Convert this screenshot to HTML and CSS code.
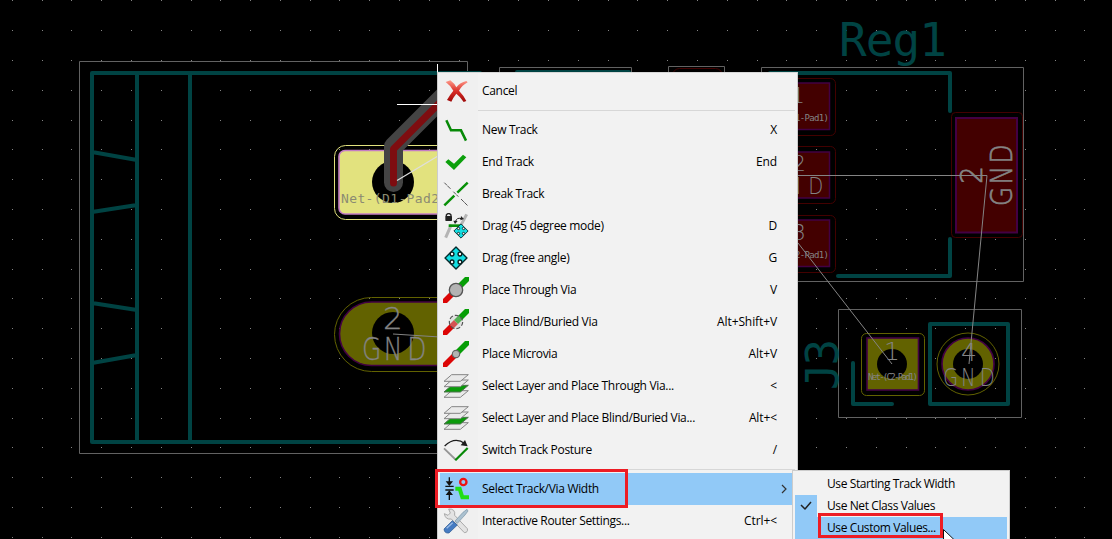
FILE: index.html
```html
<!DOCTYPE html>
<html lang="en">
<head>
<meta charset="utf-8">
<title>PCB Editor</title>
<link rel="stylesheet" href="styles.css">
</head>
<body>
<main class="editor">
<svg class="board" width="1112" height="539" viewBox="0 0 1112 539">
  <defs>
    <path id="dots" d="M12 .5h1M42 .5h1M71 .5h1M101 .5h1M131 .5h1M161 .5h1M191 .5h1M220 .5h1M250 .5h1M280 .5h1M310 .5h1M339 .5h1M369 .5h1M399 .5h1M429 .5h1M459 .5h1M488 .5h1M518 .5h1M548 .5h1M578 .5h1M608 .5h1M637 .5h1M667 .5h1M697 .5h1M727 .5h1M757 .5h1M786 .5h1M816 .5h1M846 .5h1M876 .5h1M906 .5h1M935 .5h1M965 .5h1M995 .5h1M1025 .5h1M1055 .5h1M1084 .5h1"/>
  </defs>
  <g class="grid">
    <use href="#dots" y="0"/><use href="#dots" y="30"/><use href="#dots" y="60"/><use href="#dots" y="90"/><use href="#dots" y="120"/><use href="#dots" y="149"/><use href="#dots" y="179"/><use href="#dots" y="209"/><use href="#dots" y="239"/><use href="#dots" y="269"/><use href="#dots" y="298"/><use href="#dots" y="328"/><use href="#dots" y="358"/><use href="#dots" y="388"/><use href="#dots" y="418"/><use href="#dots" y="447"/><use href="#dots" y="477"/><use href="#dots" y="507"/><use href="#dots" y="537"/>
  </g>
  <g class="courtyard">
    <path d="M79.5 61.5H467.5V453.5H79.5Z"/>
    <path d="M499.5 90V67.5H631.5V90M668.5 90V66.5H724.5V90"/>
    <path d="M761.5 67.5H1023.5V281.5H761.5Z"/>
    <path d="M838.5 309.5H1021.5V417.5H838.5Z"/>
  </g>
  <g class="silk">
    <path d="M480 73H92V442H480M137 73V442M190 73V442M92 152L137 160M92 212L137 205M92 303L137 310M92 363L137 355"/>
    <path d="M517 72H629M770 73H950V111M950 239V276H838"/>
    <path d="M930 324H1008V404H930ZM853 363V404H892"/>
  </g>
  <text class="silk-text" x="839" y="56" font-size="46" textLength="108">Reg1</text>
  <text class="silk-text" transform="translate(838 390) rotate(-90)" font-size="44" textLength="51">J3</text>

  <g class="pad-red">
    <rect x="772" y="83" width="57.5" height="46.5"/><rect x="772" y="152" width="57.5" height="46"/><rect x="772" y="220" width="57.5" height="46.5"/>
    <rect class="wide" x="956" y="118" width="61" height="114.5"/>
  </g>
  <g class="clear-red">
    <rect x="766.5" y="78.5" width="69" height="57" rx="5"/><rect x="766.5" y="146.5" width="69" height="57" rx="5"/><rect x="766.5" y="215.5" width="69" height="57" rx="5"/>
    <rect x="951.5" y="112.5" width="71" height="125" rx="4"/><rect x="672.5" y="68.5" width="50" height="50" rx="7"/>
  </g>
  <g class="pad-text">
    <text x="791" y="103" font-size="22">1</text><text class="small" x="795" y="121" font-size="9" textLength="34">1-Pad1)</text>
    <text x="792" y="171" font-size="22">2</text><text transform="translate(764 194) scale(.85 1)" x="0 27 52" font-size="23">GND</text>
    <text x="792" y="240" font-size="22">3</text><text class="small" x="795" y="258" font-size="9" textLength="34">2-Pad1)</text>
    <text class="bold" transform="translate(982 184) rotate(-90)" font-size="31" textLength="18" lengthAdjust="spacingAndGlyphs">2</text>
    <text class="bold" transform="translate(1012 206) rotate(-90) scale(.8 1)" x="0 27 53" font-size="31">GND</text>
  </g>

  <rect class="pad-olive" x="867" y="338" width="51.5" height="52"/>
  <rect class="clear-olive" x="861.5" y="333.5" width="63" height="62" rx="5"/>
  <circle class="pad-olive" cx="968" cy="364" r="26"/><circle class="clear-olive" cx="968" cy="364" r="31"/>
  <circle cx="892" cy="364" r="15"/><circle cx="968" cy="364" r="15"/>
  <g class="pad-text">
    <text x="884" y="360" font-size="25">1</text><text class="small" x="868" y="380" font-size="9" textLength="50">Net-(C2-Pad1)</text>
    <text x="961" y="361" font-size="25">4</text><text transform="translate(943 386) scale(.78 1)" x="0 23 47" font-size="25">GND</text>
  </g>

  <rect class="pad-olive" x="339.5" y="302" width="130" height="63.5" rx="32"/>
  <rect class="clear-olive" x="334.5" y="297.5" width="140" height="74" rx="37"/>
  <circle cx="393" cy="333" r="21"/>
  <g class="pad-text large">
    <text x="383" y="329" font-size="31">2</text><text transform="translate(362 360) scale(.78 1)" x="0 28 58" font-size="32">GND</text>
  </g>

  <rect class="pad-lit" x="339" y="150.5" width="130" height="63.5" rx="6"/>
  <rect class="clear-lit" x="334.5" y="145.5" width="140" height="74" rx="11"/>
  <circle cx="393" cy="182" r="21"/>
  <path class="track-clear" d="M393.5 182.500V146.500L445 95"/>
  <path class="track" d="M393.500 183V149L445 97.500"/>
  <text class="net-lit" x="341" y="203" font-size="13" textLength="98">Net-(D1-Pad2</text>
  <g class="rats">
    <path d="M797 175.500H987L969 364M798 243L892 364M393 334L440 337"/>
  </g>
  <path class="rats-lit" d="M397 180.500L438 156"/>
  <path class="cross" d="M397 104.500H438M437.500 64V73"/>
</svg>

<svg class="symbols" width="0" height="0">
  <defs>
    <linearGradient id="redfade" x1="0" y1="0" x2="0" y2="1"><stop offset="0" stop-color="#ff9a8a"/><stop offset=".5" stop-color="#d92d27"/><stop offset="1" stop-color="#9c0707"/></linearGradient>
    <symbol id="move" viewBox="-36 -36 72 72">
      <path d="M0-32L32 0 0 32-32 0Z" fill="#12dfe3" stroke="#032a2c" stroke-width="4" stroke-linejoin="round"/>
      <g fill="#f6f6f6" stroke="#0c1f20" stroke-width="4"><circle cx="-11.500" cy="-11.500" r="5.500"/><circle cx="11.500" cy="-11.500" r="5.500"/><circle cx="-11.500" cy="11.500" r="5.500"/><circle cx="11.500" cy="11.500" r="5.500"/></g>
    </symbol>
    <symbol id="layers" viewBox="0 0 78 78">
      <g fill="#e9e9e9" stroke="#858585" stroke-width="3" stroke-linejoin="round">
        <path d="M26 53H76L52 73H3Z"/><path d="M26 37H76L52 57H3Z" fill="#0a9a0a" stroke="#4e704e"/><path d="M26 21H76L52 41H3Z"/><path d="M26 5H76L52 25H3Z"/>
      </g>
    </symbol>
  </defs>
</svg>

<nav class="menu">
  <div class="item"><svg class="icon" viewBox="0 0 78 78"><path fill="url(#redfade)" d="M8 12L22 7Q34 16 40 28Q51 13 70 9L74 13Q57 22 48 38Q61 51 70 69L62 72Q52 56 40 47Q31 58 25 71L12 66Q20 51 31 38Q22 22 8 12Z"/></svg><span>Cancel</span></div>
  <hr class="rule">
  <div class="item"><svg class="icon" viewBox="0 0 78 78"><path d="M10 10L24 40H54L69 71" fill="none" stroke="#078907" stroke-width="7.500"/></svg><span>New Track</span><kbd>X</kbd></div>
  <div class="item"><svg class="icon" viewBox="0 0 78 78"><path d="M7 39L16 31 33 44 60 17 70 25 33 63Z" fill="#0ca00c"/></svg><span>End Track</span><kbd>End</kbd></div>
  <div class="item"><svg class="icon" viewBox="0 0 78 78"><path d="M4 5L23 24M31 32L46 47M54 54L75 75" stroke="#555" stroke-width="3" stroke-dasharray="12 2"/><path d="M4 73L34 44M43 35L74 5" stroke="#079007" stroke-width="7.500"/></svg><span>Break Track</span></div>
  <div class="item"><svg class="icon" viewBox="0 0 78 78"><path d="M8 74L25 35M53 38L71 4" stroke="#b4b4b4" stroke-width="9"/><path d="M17 38H53" stroke="#078e07" stroke-width="8"/><path d="M10 11V6Q17-3 24 6V11" fill="none" stroke="#222" stroke-width="4"/><rect x="7" y="9" width="20" height="15" rx="2" fill="#222"/><path d="M37 27Q41 12 55 17" fill="none" stroke="#222" stroke-width="3"/><path d="M31 23L44 24 36 33ZM54 9L63 18 52 22Z" fill="#222"/><use href="#move" x="30" y="30" width="48" height="48"/></svg><span>Drag (45 degree mode)</span><kbd>D</kbd></div>
  <div class="item"><svg class="icon" viewBox="0 0 78 78"><use href="#move" x="2" y="2" width="74" height="74"/></svg><span>Drag (free angle)</span><kbd>G</kbd></div>
  <div class="item"><svg class="icon" viewBox="0 0 78 78"><path d="M0 78L39 39" stroke="#dc0505" stroke-width="17"/><path d="M39 39L78 0" stroke="#069e06" stroke-width="17"/><circle cx="39" cy="39" r="20" fill="#b3b3b3" stroke="#545454" stroke-width="4"/></svg><span>Place Through Via</span><kbd>V</kbd></div>
  <div class="item"><svg class="icon" viewBox="0 0 78 78"><path d="M0 78L39 39" stroke="#dc0505" stroke-width="17"/><path d="M39 39L78 0" stroke="#069e06" stroke-width="17"/><circle cx="39" cy="39" r="20" fill="#c8c8c8" fill-opacity=".4" stroke="#545454" stroke-width="3.500" stroke-dasharray="12 6"/></svg><span>Place Blind/Buried Via</span><kbd>Alt+Shift+V</kbd></div>
  <div class="item"><svg class="icon" viewBox="0 0 78 78"><path d="M0 78L39 39" stroke="#dc0505" stroke-width="17"/><path d="M39 39L78 0" stroke="#069e06" stroke-width="17"/><circle cx="39" cy="39" r="11" fill="#b3b3b3" stroke="#646464" stroke-width="3.500"/></svg><span>Place Microvia</span><kbd>Alt+V</kbd></div>
  <div class="item"><svg class="icon"><use href="#layers"/></svg><span>Select Layer and Place Through Via...</span><kbd>&lt;</kbd></div>
  <div class="item"><svg class="icon"><use href="#layers"/></svg><span>Select Layer and Place Blind/Buried Via...</span><kbd>Alt+&lt;</kbd></div>
  <div class="item"><svg class="icon" viewBox="0 0 78 78"><path d="M5 27Q36-3 66 20" fill="none" stroke="#1c1c1c" stroke-width="4"/><path d="M53 25L74 28 66 9Z" fill="#1c1c1c"/><path d="M3 34L39 69" stroke="#959595" stroke-width="5.500"/><path d="M37 70L74 33" stroke="#078907" stroke-width="6.500"/></svg><span>Switch Track Posture</span><kbd>/</kbd></div>
  <hr class="rule">
  <div class="item active"><svg class="icon" viewBox="0 0 78 78"><path d="M19 4V24M19 48V72M7 31H32M7 42H32" stroke="#111" stroke-width="4"/><path d="M8 16H30L19 30ZM8 57H30L19 43Z" fill="#111"/><circle cx="61" cy="18" r="9.500" fill="none" stroke="#ee1212" stroke-width="7"/><path d="M37 38H50L58 64H78" fill="none" stroke="#20df14" stroke-width="12"/></svg><span>Select Track/Via Width</span><svg class="arrow" viewBox="0 0 6 10"><path d="M1 1L5 5 1 9"/></svg></div>
  <div class="item"><svg class="icon" viewBox="0 0 78 78"><path d="M4 17L15 22 22 15 17 3Q38 2 35 22L73 62Q76 73 64 74L25 33Q7 36 4 17Z" fill="#e3e3e3" stroke="#9c9c9c" stroke-width="2.500"/><path d="M36 39L60 13 72 4 75 9 66 21 43 46Z" fill="#abc1d0" stroke="#7992a5" stroke-width="2"/><path d="M28 38L43 51 18 75Q4 77 3 63Z" fill="#457bc2" stroke="#26548e" stroke-width="2"/><path d="M11 61L29 44" stroke="#9abce6" stroke-width="4"/></svg><span>Interactive Router Settings...</span><kbd>Ctrl+&lt;</kbd></div>
</nav>

<nav class="submenu">
  <div class="option"><span>Use Starting Track Width</span></div>
  <div class="option checked"><svg class="tick" viewBox="0 0 22 22"><path d="M6 10L10 14 16 7"/></svg><span>Use Net Class Values</span></div>
  <div class="option active"><span>Use Custom Values...</span></div>
</nav>
<div class="mark mark-width"></div>
<div class="mark mark-custom"></div>
<svg class="cursor" width="14" height="20" viewBox="0 0 14 20"><path d="M.5 .5V17L4.500 13.500 7 19 10 18 7.500 12.500H13Z"/></svg>
</main>
</body>
</html>
```
FILE: styles.css
```css
body { margin: 0; background: #000; }
.editor { position: relative; width: 1112px; height: 539px; overflow: hidden; font-family: "Open Sans", "Noto Sans", sans-serif; font-size: 12px; color: #000; }
.board { display: block; }
.symbols { position: absolute; }
.grid { stroke: #848484; shape-rendering: crispEdges; }
.courtyard { fill: none; stroke: #626262; }
.silk { fill: none; stroke: #004343; stroke-width: 4; stroke-linecap: round; stroke-linejoin: round; }
.silk-text { fill: #004343; font-family: "DejaVu Sans Mono", monospace; }
.pad-red { fill: #430000; stroke: #430043; stroke-width: 1.5; }
.pad-red .wide { stroke-width: 2; }
.clear-red { fill: none; stroke: #430000; }
.pad-olive { fill: #626200; stroke: #430043; stroke-width: 1.6; }
.clear-olive { fill: none; stroke: #626200; }
.pad-lit { fill: #e2e27e; stroke: #c47dc4; stroke-width: 1.6; }
.clear-lit { fill: none; stroke: #e2e27e; }
.track-clear, .track { fill: none; stroke-linecap: round; stroke-linejoin: round; }
.track-clear { stroke: #444; stroke-width: 19; }
.track { stroke: #7e0d10; stroke-width: 7; }
.pad-text { fill: #848484; font-family: "DejaVu Sans", sans-serif; font-weight: 200; }
.pad-text .small { font-family: "DejaVu Sans Mono", monospace; font-weight: 400; }
.pad-text .bold { stroke: #848484; stroke-width: .7; }
.pad-text.large { stroke: #848484; stroke-width: .3; }
.net-lit { fill: #8b8b72; font-family: "DejaVu Sans Mono", monospace; }
.rats { fill: none; stroke: #848484; }
.rats-lit { stroke: #dedede; stroke-width: 1.2; }
.cross { fill: none; stroke: #fff; }

.menu { position: absolute; left: 437px; top: 72px; width: 361px; height: 470px; box-sizing: border-box; padding: 2px 2px 0; border: 1px solid #ccc; border-top-color: #d8d8d8; background: linear-gradient(90deg, #f0f0f0 40px, #f2f2f2 40px); }
.item { display: flex; align-items: center; height: 32px; padding: 0 18px 0 3px; white-space: pre; }
.item.active { background: #91c9f7; padding-right: 8px; }
.icon { width: 26px; height: 26px; margin-right: 13px; flex: none; }
.item span, .item kbd, .option span { padding-bottom: 1px; letter-spacing: -0.32px; }
.item span { flex: 1; }
.item kbd { font: inherit; letter-spacing: -0.1px; }
.option span { letter-spacing: -0.4px; }
.rule { height: 1px; margin: 3px 0 3px 38px; border: 0; background: #d7d7d7; }
.arrow { width: 6px; height: 10px; fill: none; stroke: #333; stroke-width: 1.2; }

.submenu { position: absolute; left: 792px; top: 470px; width: 218px; height: 75px; box-sizing: border-box; padding: 2px; border: 1px solid #ccc; background: #f2f2f2; }
.option { display: flex; align-items: center; height: 22px; padding-left: 32px; white-space: pre; }
.option.checked { padding-left: 0; }
.tick { width: 22px; height: 22px; margin-right: 10px; background: #91c9f7; fill: none; stroke: #222; stroke-width: 1.5; }
.option.active { background: #91c9f7; }
.mark { position: absolute; box-sizing: border-box; border: 3px solid #ed1c24; }
.mark-width { left: 435px; top: 469px; width: 193px; height: 39px; }
.mark-custom { left: 818px; top: 513px; width: 125px; height: 25px; }
.cursor { position: absolute; left: 943px; top: 529px; fill: #fff; stroke: #111; }
```
